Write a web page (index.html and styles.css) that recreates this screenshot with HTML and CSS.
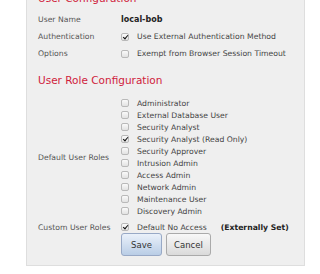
FILE: index.html
```html
<!DOCTYPE html>
<html lang="en">
<head>
  <meta charset="UTF-8"/>
  <meta name="viewport" content="width=device-width, initial-scale=1.0"/>
  <title>User Configuration</title>
  <link rel="stylesheet" href="styles.css">
</head>
<body>
  <div class="panel">
    <h2 class="heading first">User Configuration</h2>

    <div class="row">
      <span class="label">User Name</span>
      <span class="value"><b>local-bob</b></span>
    </div>
    <div class="row">
      <span class="label">Authentication</span>
      <span class="value"><span class="cb on"></span>Use External Authentication Method</span>
    </div>
    <div class="row">
      <span class="label">Options</span>
      <span class="value"><span class="cb"></span>Exempt from Browser Session Timeout</span>
    </div>

    <h2 class="heading">User Role Configuration</h2>

    <div class="row roles">
      <span class="label">Default User Roles</span>
      <ul class="role-list">
        <li><span class="cb"></span>Administrator</li>
        <li><span class="cb"></span>External Database User</li>
        <li><span class="cb"></span>Security Analyst</li>
        <li><span class="cb on"></span>Security Analyst (Read Only)</li>
        <li><span class="cb"></span>Security Approver</li>
        <li><span class="cb"></span>Intrusion Admin</li>
        <li><span class="cb"></span>Access Admin</li>
        <li><span class="cb"></span>Network Admin</li>
        <li><span class="cb"></span>Maintenance User</li>
        <li><span class="cb"></span>Discovery Admin</li>
      </ul>
    </div>
    <div class="row custom">
      <span class="label">Custom User Roles</span>
      <span class="value"><span class="cb on"></span>Default No Access <b class="ext">(Externally Set)</b></span>
    </div>

    <div class="actions">
      <button class="btn save">Save</button>
      <button class="btn">Cancel</button>
    </div>
  </div>
</body>
</html>
```

FILE: styles.css
```css
* { box-sizing: border-box; }
body { margin: 0; background: #fff; font-family: "DejaVu Sans", Verdana, sans-serif; font-size: 7.7px; color: #444; }
.panel { width: 279px; margin: -12px 0 0 26px; padding: 0 0 9px 11px; background: #efefef; border: 1px solid #dedede; border-top: none; }
.heading { margin: 0; height: 20px; line-height: 20px; font-size: 10.5px; font-weight: normal; color: #d01c3c; }
.heading.first { margin-bottom: 3px; }
.heading + .roles { margin-top: 7px; }
.row { display: flex; align-items: center; height: 17px; }
.row + .heading { margin-top: 8px; }
.label { width: 83px; flex: none; color: #555; }
.value { display: flex; align-items: center; }
.value b { color: #222; font-size: 8px; }
.roles { height: auto; }
.role-list { list-style: none; margin: 0; padding: 0; }
.role-list li { display: flex; align-items: center; height: 12px; }
.custom { height: 12px; margin-top: 4px; }
.value b.ext { margin-left: 14px; font-size: 7.7px; }
.cb { width: 8px; height: 8px; margin: 0 8px 0 0; border: 1px solid #b9b9b9; border-radius: 2px; background: linear-gradient(#fafafa, #e2e2e2); position: relative; flex: none; }
.cb.on::after { content: ""; position: absolute; left: 2px; top: 0px; width: 2px; height: 4px; border: solid #111; border-width: 0 1.5px 1.5px 0; transform: rotate(40deg); }
.actions { display: flex; gap: 4px; margin: 0 0 0 83px; }
.btn { height: 23px; padding: 0 7px; font-family: inherit; font-size: 8.5px; color: #333; border: 1px solid #aaa; border-radius: 3px; background: linear-gradient(#f8f8f8, #dadada); }
.btn.save { width: 41px; padding: 0; border-color: #98a9c6; background: linear-gradient(#eaf1fa, #b9cde6); }
```
